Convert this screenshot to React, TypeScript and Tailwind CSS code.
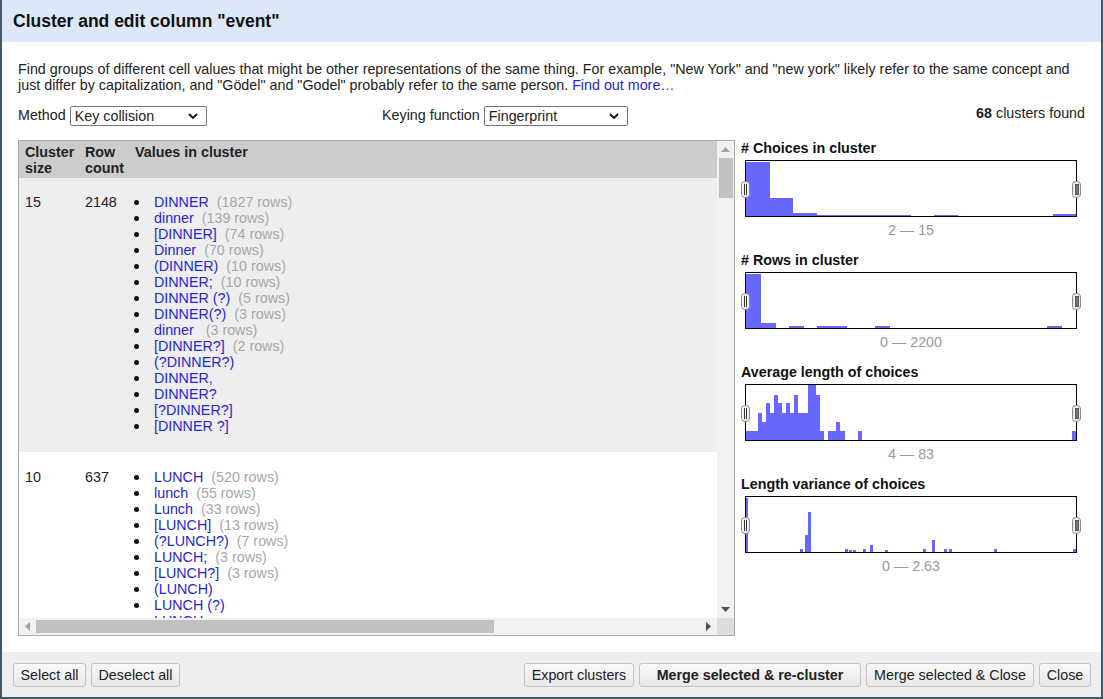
import React from "react";

type Bar = [number, number, number];

const choicesBars: Bar[] = [
  [0, 24, 54],
  [24, 23, 18],
  [47, 24, 3],
  [71, 94, 1],
  [188, 24, 1],
  [307, 24, 2],
];

const rowsBars: Bar[] = [
  [0, 15, 54],
  [15, 15, 5],
  [43, 15, 2],
  [71, 30, 2],
  [129, 15, 2],
  [301, 15, 2],
];

const avgBars: Bar[] = [
  [0, 12, 9],
  [12, 4, 27],
  [16, 4, 18],
  [20, 4, 37],
  [24, 4, 27],
  [28, 4, 45],
  [32, 4, 37],
  [36, 4, 27],
  [40, 4, 37],
  [44, 4, 27],
  [48, 4, 45],
  [52, 4, 27],
  [56, 6, 27],
  [62, 8, 55],
  [70, 4, 45],
  [74, 4, 9],
  [82, 8, 9],
  [90, 4, 18],
  [94, 5, 9],
  [112, 4, 9],
  [326, 4, 9],
];

const varBars: Bar[] = [
  [0, 2, 54],
  [54, 3, 3],
  [59, 3, 17],
  [62, 3, 40],
  [99, 3, 3],
  [103, 3, 2],
  [107, 3, 2],
  [117, 3, 3],
  [124, 3, 7],
  [139, 3, 2],
  [177, 3, 3],
  [186, 3, 12],
  [198, 3, 3],
  [203, 3, 3],
  [248, 3, 3],
  [327, 3, 3],
];

type Val = [string, string?];

const dinner: Val[] = [
  ["DINNER", "(1827 rows)"],
  ["dinner", "(139 rows)"],
  ["[DINNER]", "(74 rows)"],
  ["Dinner", "(70 rows)"],
  ["(DINNER)", "(10 rows)"],
  ["DINNER;", "(10 rows)"],
  ["DINNER (?)", "(5 rows)"],
  ["DINNER(?)", "(3 rows)"],
  ["dinner ", "(3 rows)"],
  ["[DINNER?]", "(2 rows)"],
  ["(?DINNER?)"],
  ["DINNER,"],
  ["DINNER?"],
  ["[?DINNER?]"],
  ["[DINNER ?]"],
];

const lunch: Val[] = [
  ["LUNCH", "(520 rows)"],
  ["lunch", "(55 rows)"],
  ["Lunch", "(33 rows)"],
  ["[LUNCH]", "(13 rows)"],
  ["(?LUNCH?)", "(7 rows)"],
  ["LUNCH;", "(3 rows)"],
  ["[LUNCH?]", "(3 rows)"],
  ["(LUNCH)"],
  ["LUNCH (?)"],
  ["LUNCH,"],
  ["LUNCH?"],
];

function Handle({ side }: { side: "left" | "right" }) {
  if (side === "left") {
    return (
      <div className="absolute left-[-5px] top-[20px] w-[9px] h-[17px] rounded-[4px] border border-[#8a8a8a] bg-[#f2f2f2] flex items-center justify-center gap-[1px]">
        <div className="w-[1px] h-[11px] bg-[#333]" />
        <div className="w-[1px] h-[11px] bg-[#333]" />
      </div>
    );
  }
  return (
    <div className="absolute right-[-5px] top-[20px] w-[9px] h-[17px] rounded-[4px] border border-[#8a8a8a] bg-[#f2f2f2] flex items-center justify-center">
      <div className="w-[4px] h-[11px] bg-[#7a7a7a] border border-[#555]" />
    </div>
  );
}

function Hist({ title, range, bars }: { title: string; range: string; bars: Bar[] }) {
  return (
    <div className="mb-[14px]">
      <div className="font-bold leading-[16px] h-[20px] text-[#111]">{title}</div>
      <div className="relative ml-[4px] w-[332px] h-[57px] border border-black bg-white">
        <svg width="330" height="55" className="block">
          {bars.map(([x, w, h], i) => (
            <rect key={i} x={x} y={55 - h} width={w} height={h} fill="#6868ff" />
          ))}
        </svg>
        <Handle side="left" />
        <Handle side="right" />
      </div>
      <div className="mt-[5px] ml-[4px] w-[332px] leading-[16px] text-center text-[#999]">{range}</div>
    </div>
  );
}

function Select({ label, width }: { label: string; width: string }) {
  return (
    <div className={`${width} h-[20px] border border-[#767676] rounded-[2px] bg-white flex items-center justify-between pl-[4px] pr-[8px] leading-[16px]`}>
      <span>{label}</span>
      <svg width="10" height="6" viewBox="0 0 10 6">
        <path d="M1 1 L5 5 L9 1" fill="none" stroke="#111" strokeWidth="1.8" />
      </svg>
    </div>
  );
}

function ValueList({ items }: { items: Val[] }) {
  return (
    <div className="leading-[16px]">
      {items.map(([v, c], i) => (
        <div key={i} className="flex items-center whitespace-pre">
          <div className="w-[5px] h-[5px] rounded-full bg-[#111] ml-[5px] mr-[15px] shrink-0" />
          <span className="text-[#2626d4]">{v}</span>
          {c && <span className="ml-[8px] text-[#a8a8a8]">{c}</span>}
        </div>
      ))}
    </div>
  );
}

function Btn({ children, className = "" }: { children: React.ReactNode; className?: string }) {
  return (
    <div
      className={`h-[24px] flex items-center justify-center border border-[#c4c4c4] rounded-[3px] bg-gradient-to-b from-[#f8f8f8] to-[#e8e8e8] text-[#222] leading-[16px] ${className}`}
    >
      {children}
    </div>
  );
}

export default function App() {
  return (
    <div className="w-[1103px] h-[699px] flex flex-col border-x-2 border-b-2 border-[#44576a] bg-white font-['Liberation_Sans',Arial,sans-serif] text-[14.3px] text-[#222] overflow-hidden">
      {/* Header */}
      <div className="h-[42px] shrink-0 bg-[#dce8f9] pl-[11px] flex items-center">
        <div className="text-[17.5px] font-bold text-[#111] leading-[20px]">Cluster and edit column "event"</div>
      </div>

      {/* Body */}
      <div className="h-[610px] shrink-0 px-[16px] pt-[19px] pb-[16px] flex flex-col overflow-hidden">
        <p className="leading-[16px] h-[32px]">
          Find groups of different cell values that might be other representations of the same thing. For example, "New York" and "new york" likely refer to the same concept and
          <br />
          just differ by capitalization, and "Gödel" and "Godel" probably refer to the same person.{" "}
          <span className="text-[#2626d4]">Find out more…</span>
        </p>

        <div className="mt-[13px] h-[20px] flex items-center">
          <div className="w-[364px] flex items-center gap-[4px]">
            <span>Method</span>
            <Select label="Key collision" width="w-[137px]" />
          </div>
          <div className="flex items-center gap-[4px]">
            <span>Keying function</span>
            <Select label="Fingerprint" width="w-[144px]" />
          </div>
          <div className="ml-auto -mt-[4px]">
            <span className="font-bold">68</span> clusters found
          </div>
        </div>

        <div className="mt-[14px] h-[496px] flex gap-[6px]">
          {/* Table panel */}
          <div className="w-[717px] h-[496px] border border-[#a9a9a9] flex flex-col overflow-hidden">
            <div className="flex h-[477px]">
              <div className="flex-1 overflow-hidden">
                <div className="grid grid-cols-[60px_50px_1fr] bg-[#cccccc] font-bold leading-[16px] pt-[3px] pb-[2px] h-[37px]">
                  <div className="pl-[6px]">Cluster<br />size</div>
                  <div className="pl-[6px]">Row<br />count</div>
                  <div className="pl-[6px]">Values in cluster</div>
                </div>
                <div className="grid grid-cols-[60px_50px_1fr] bg-[#eeeeee] leading-[16px] pt-[16px] pb-[18px]">
                  <div className="pl-[6px]">15</div>
                  <div className="pl-[6px]">2148</div>
                  <ValueList items={dinner} />
                </div>
                <div className="grid grid-cols-[60px_50px_1fr] bg-white leading-[16px] pt-[17px] pb-[18px]">
                  <div className="pl-[6px]">10</div>
                  <div className="pl-[6px]">637</div>
                  <ValueList items={lunch} />
                </div>
              </div>
              {/* vertical scrollbar */}
              <div className="w-[17px] bg-[#f1f1f1] flex flex-col items-center">
                <div className="h-[17px] flex items-center justify-center">
                  <svg width="9" height="5" viewBox="0 0 9 5"><path d="M0 5 L4.5 0 L9 5 Z" fill="#a3a3a3" /></svg>
                </div>
                <div className="w-[14px] h-[40px] bg-[#c1c1c1]" />
                <div className="flex-1" />
                <div className="h-[17px] flex items-center justify-center">
                  <svg width="9" height="5" viewBox="0 0 9 5"><path d="M0 0 L9 0 L4.5 5 Z" fill="#505050" /></svg>
                </div>
              </div>
            </div>
            {/* horizontal scrollbar */}
            <div className="h-[17px] flex bg-[#f1f1f1]">
              <div className="w-[17px] flex items-center justify-center">
                <svg width="5" height="9" viewBox="0 0 5 9"><path d="M5 0 L5 9 L0 4.5 Z" fill="#a3a3a3" /></svg>
              </div>
              <div className="w-[458px] my-[2px] bg-[#c1c1c1]" />
              <div className="flex-1" />
              <div className="w-[17px] flex items-center justify-center">
                <svg width="5" height="9" viewBox="0 0 5 9"><path d="M0 0 L5 4.5 L0 9 Z" fill="#505050" /></svg>
              </div>
              <div className="w-[17px] bg-[#dcdcdc]" />
            </div>
          </div>

          {/* Right panel */}
          <div className="flex-1">
            <Hist title="# Choices in cluster" range="2 — 15" bars={choicesBars} />
            <Hist title="# Rows in cluster" range="0 — 2200" bars={rowsBars} />
            <Hist title="Average length of choices" range="4 — 83" bars={avgBars} />
            <Hist title="Length variance of choices" range="0 — 2.63" bars={varBars} />
          </div>
        </div>
      </div>

      {/* Footer */}
      <div className="h-[45px] shrink-0 bg-[#eeeeee] pl-[11px] pr-[10px] pt-[11px] flex items-start">
        <div className="flex gap-[5px]">
          <Btn className="w-[73px]">Select all</Btn>
          <Btn className="w-[89px]">Deselect all</Btn>
        </div>
        <div className="ml-auto flex gap-[5px]">
          <Btn className="w-[110px]">Export clusters</Btn>
          <Btn className="w-[222px] font-bold">Merge selected &amp; re-cluster</Btn>
          <Btn className="w-[168px]">Merge selected &amp; Close</Btn>
          <Btn className="w-[52px]">Close</Btn>
        </div>
      </div>
    </div>
  );
}
